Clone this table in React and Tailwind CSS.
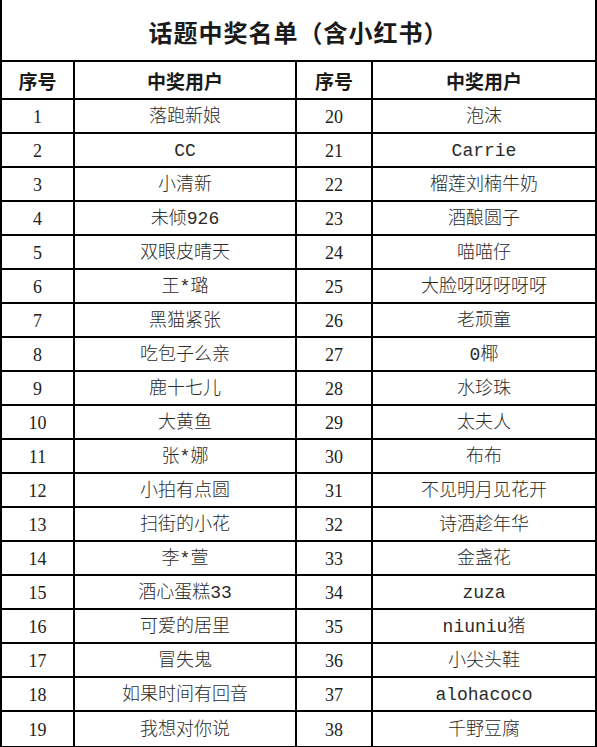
import React from "react";

const rows = [
  ["1", "落跑新娘", "20", "泡沫"],
  ["2", "CC", "21", "Carrie"],
  ["3", "小清新", "22", "榴莲刘楠牛奶"],
  ["4", "未倾926", "23", "酒酿圆子"],
  ["5", "双眼皮晴天", "24", "喵喵仔"],
  ["6", "王*璐", "25", "大脸呀呀呀呀呀"],
  ["7", "黑猫紧张", "26", "老顽童"],
  ["8", "吃包子么亲", "27", "0椰"],
  ["9", "鹿十七儿", "28", "水珍珠"],
  ["10", "大黄鱼", "29", "太夫人"],
  ["11", "张*娜", "30", "布布"],
  ["12", "小拍有点圆", "31", "不见明月见花开"],
  ["13", "扫街的小花", "32", "诗酒趁年华"],
  ["14", "李*萱", "33", "金盏花"],
  ["15", "酒心蛋糕33", "34", "zuza"],
  ["16", "可爱的居里", "35", "niuniu猪"],
  ["17", "冒失鬼", "36", "小尖头鞋"],
  ["18", "如果时间有回音", "37", "alohacoco"],
  ["19", "我想对你说", "38", "千野豆腐"],
];

const numFont = "font-['Liberation_Serif','Noto_Sans_CJK_SC',serif] text-[#222]";
const nameFont = "font-['Liberation_Mono','Noto_Sans_CJK_SC',monospace] font-light text-[#2a2a2a]";

export default function App() {
  return (
    <div className="w-[597px] h-[747px] bg-white text-[#1a1a1a] font-['Noto_Sans_CJK_SC',sans-serif]">
      <div className="w-[597px] border-l-2 border-r-2 border-b-2 border-black">
        {/* Title */}
        <div className="h-[62px] pt-[4px] flex items-center justify-center border-b-2 border-black text-[24px] font-bold tracking-[1px]">
          话题中奖名单（含小红书）
        </div>

        {/* Header */}
        <div className="grid grid-cols-[73px_222px_76px_1fr] h-[38px] border-b-2 border-black text-[19px] font-bold">
          <div className="flex items-center justify-center pt-[2px] border-r-2 border-black">序号</div>
          <div className="flex items-center justify-center pt-[2px] border-r-2 border-black">中奖用户</div>
          <div className="flex items-center justify-center pt-[2px] border-r-2 border-black">序号</div>
          <div className="flex items-center justify-center pt-[2px]">中奖用户</div>
        </div>

        {/* Rows */}
        {rows.map((r, i) => (
          <div
            key={r[0]}
            className={`grid grid-cols-[73px_222px_76px_1fr] h-[34px] text-[18px] ${
              i < rows.length - 1 ? "border-b-2 border-black" : ""
            }`}
          >
            <div className={`flex items-center justify-center pt-[3px] border-r-2 border-black ${numFont}`}>{r[0]}</div>
            <div className={`flex items-center justify-center pt-[3px] border-r-2 border-black ${nameFont}`}>{r[1]}</div>
            <div className={`flex items-center justify-center pt-[3px] border-r-2 border-black ${numFont}`}>{r[2]}</div>
            <div className={`flex items-center justify-center pt-[3px] ${nameFont}`}>{r[3]}</div>
          </div>
        ))}
      </div>
    </div>
  );
}
